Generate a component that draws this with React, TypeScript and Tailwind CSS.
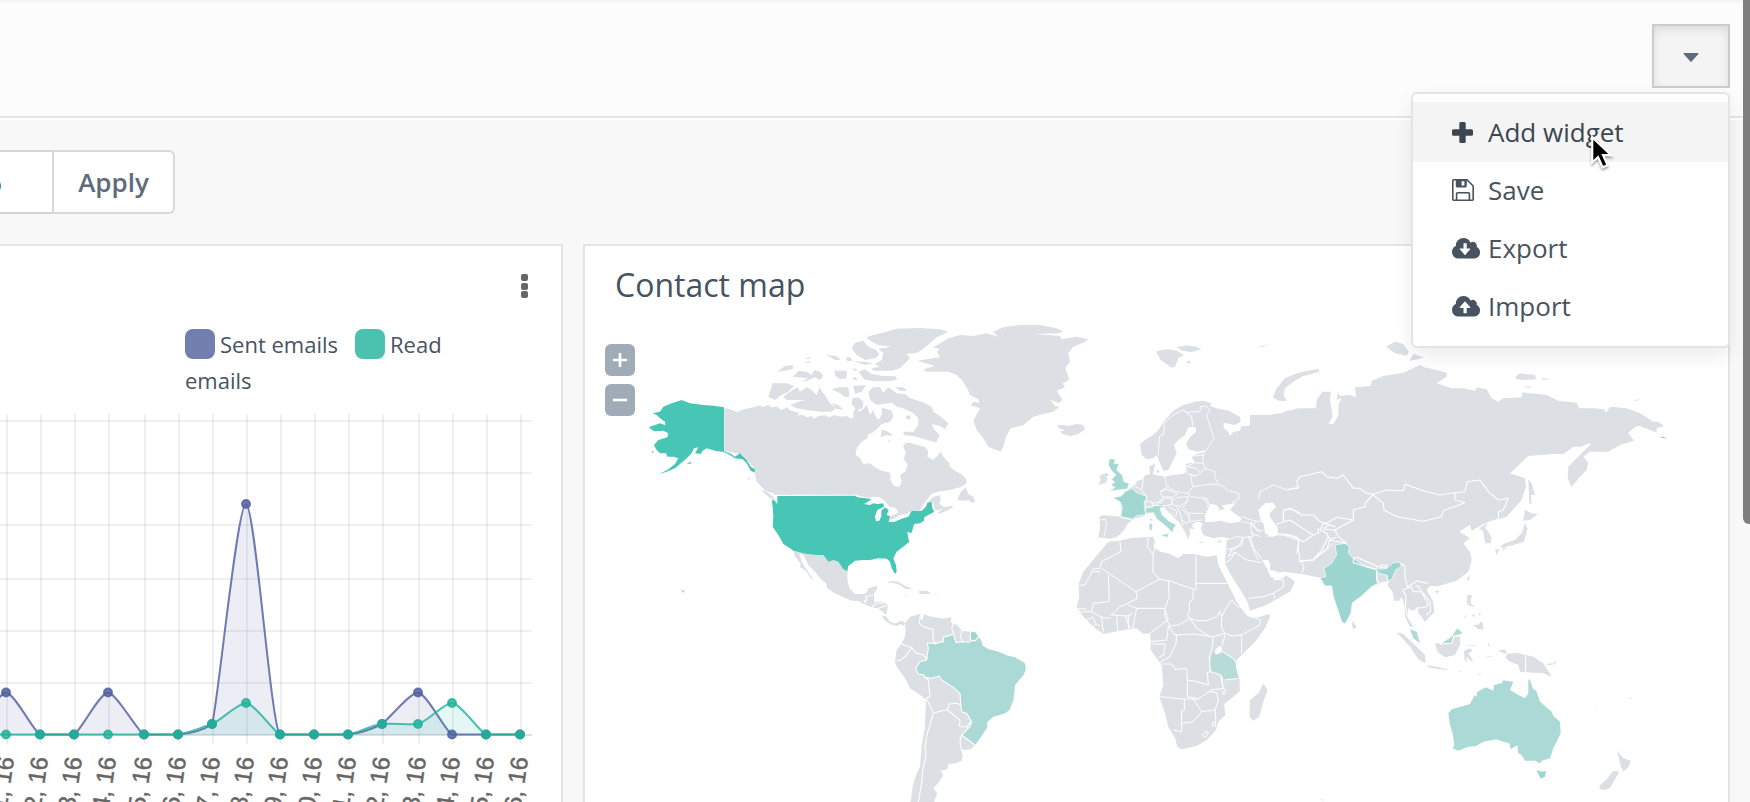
const LAND = '#dcdfe4';

/* ---------- Emails chart ---------- */

const xs = [6, 40, 74, 108, 144, 178, 212, 246, 280, 314, 348, 382, 418, 452, 486, 520];
const sent = [4, 0, 0, 4, 0, 0, 1, 22, 0, 0, 0, 1, 4, 0, 0, 0];
const read = [0, 0, 0, 0, 0, 0, 1, 3, 0, 0, 0, 1, 1, 3, 0, 0];
const toY = (v: number) => 734.5 - v * 10.48;

const sentLine =
  'M-28 734C-22 732 -2 692.5 6 692.5C14 692.5 34 732 40 734.5H74C80 732 100 692.5 108 692.5C116 692.5 138 732 144 734.5H178C190 733.5 204 730 212 724C217 712 237 504 246 504C255 504 271 727 280 734.5H348C360 733.500 372 729 382 724C390 718 410 692.5 418 692.5C426 692.5 446 732 452 734.5H520';
const readLine =
  'M-28 734.5H178C188 733.500 202 727 212 724C220 721 238 703 246 703C254 703 274 732 280 734.5H348C358 733.500 370 725 382 724C394 723 408 725 418 724C427 722 444 703 452 703C460 703 480 732 486 734.5H520';

function EmailChart() {
  return (
    <svg viewBox="0 410 561 392" className="block w-full" role="img" aria-label="Emails in time">
      <g stroke="#000" strokeOpacity="0.06" strokeWidth="2">
        {xs.map((x) => (
          <path key={x} d={`M${x + 1} 414V744`} />
        ))}
        {[421, 473, 525, 579, 631, 683].map((y) => (
          <path key={y} d={`M0 ${y}H532`} />
        ))}
        <path d="M0 735H532" strokeOpacity="0.12" />
      </g>
      <path d={sentLine + 'V735H-28Z'} fill="#4e5d9d" fillOpacity="0.1" />
      <path d={sentLine} fill="none" stroke="#4e5d9d" strokeOpacity="0.8" strokeWidth="2" />
      {xs.map((x, i) => (
        <circle key={x} cx={x} cy={toY(sent[i])} r="4" fill="#4e5d9d" fillOpacity="0.8" stroke="#4e5d9d" strokeOpacity="0.8" strokeWidth="2" />
      ))}
      <path d={readLine + 'V735H-28Z'} fill="#00b49c" fillOpacity="0.1" />
      <path d={readLine} fill="none" stroke="#1fb299" strokeOpacity="0.8" strokeWidth="2" />
      {xs.map((x, i) => (
        <circle key={x} cx={x} cy={toY(read[i])} r="4" fill="#1fb299" fillOpacity="0.8" stroke="#1fb299" strokeOpacity="0.8" strokeWidth="2" />
      ))}
      <g fill="#666" stroke="#666" strokeWidth="0.5" fontSize="24" fontFamily='"Liberation Sans", Arial, sans-serif' textAnchor="end">
        {xs.map((x, i) => (
          <text key={x} transform={`translate(${x + 8} 758) rotate(-82)`}>{`Jan ${i + 1}, 16`}</text>
        ))}
      </g>
    </svg>
  );
}

/* ---------- World map ---------- */

function WorldMap() {
  return (
    <svg viewBox="585 310 1143 492" className="block w-full" role="img" aria-label="Contacts by country">
      <g transform="translate(1040 320) scale(.33333)" fill={LAND}>
        <path d="M300 372L318 358 340 345 355 330 375 300 400 272 430 255 465 245 490 242 515 250 510 258 530 265 565 272 600 290 602 305 585 315 550 308 552 325 565 335 570 348 580 335 600 332 605 318 625 318 635 308 630 285 645 285 650 300 665 300 690 285 720 282 740 272 755 270 765 280 780 265 860 265 860 720 555 720 558 700 562 672 566 655 545 650 520 655 490 645 482 625 488 612 480 605 462 608 455 618 466 628 448 625 450 640 445 658 432 630 422 612 410 600 385 575 370 560 345 570 315 585 308 590 285 595 278 600 265 610 250 632 232 650 210 656 195 655 175 652 180 625 178 590 190 585 240 590 245 570 240 545 220 535 245 525 270 505 285 495 292 482 310 478 312 468 330 462 328 440 345 430 342 450 338 462 350 465 375 470 400 465 430 462 440 455 438 432 448 430 465 428 455 412 470 402 495 395 500 390 470 395 445 388 438 370 450 352 468 335 466 320 445 322 435 345 415 360 402 375 410 400 395 430 385 450 370 452 360 430 350 405 340 415 320 418 305 405Z" />
        <path d="M350 448L360 455 350 460ZM348 95L365 90 385 88 410 92 432 105 415 115 405 140 395 143 380 132 362 120ZM410 82L440 76 470 80 485 88 455 96 425 92ZM438 122L455 125 445 132ZM655 80L690 72 665 82ZM178 468L195 460 202 475 198 488 174 495 182 480ZM472 665L495 666 485 669ZM530 664L548 660 540 668Z" />
      </g>
      <g transform="translate(1270 320) scale(.33333)" fill={LAND}>
        <path d="M-60 285L0 285 25 280 50 280 80 265 110 270 150 288 155 275 138 262 140 240 158 215 183 215 180 240 185 270 188 290 175 312 190 312 205 285 205 255 215 235 200 240 205 215 210 228 240 225 258 232 255 202 302 198 305 182 340 168 400 158 450 135 462 142 500 150 530 158 530 170 500 190 545 205 580 205 615 212 620 202 650 208 665 235 685 245 700 235 755 232 757 217 830 225 865 242 920 248 928 265 975 265 1000 268 1010 277 1020 260 1070 265 1110 280 1150 305 1165 305 1182 318 1160 325 1160 338 1110 318 1100 318 1075 338 1092 362 1050 375 1015 395 960 395 940 410 955 428 950 450 930 470 905 500 893 475 895 440 920 415 965 370 950 372 935 380 910 380 880 402 850 402 775 408 720 460 765 475 768 500 755 540 710 590 685 598 660 605 645 622 658 640 665 655 662 670 645 670 640 635 628 625 640 612 605 632 600 615 568 635 580 642 600 655 580 670 598 695 605 720 -60 720Z" />
        <path d="M8 232L20 205 45 175 85 158 145 146 148 155 100 168 70 185 45 205 40 225 50 243 25 242ZM348 80L375 65 400 72 417 95 410 107 375 100ZM418 122L430 102 462 112 445 118ZM737 170L750 160 795 165 798 178 765 180 740 178ZM813 173L845 178 820 179ZM762 202L775 199 788 204ZM1092 240L1115 238 1098 243ZM775 478L785 490 795 525 782 525 785 552 778 550Z" />
      </g>
      <g transform="translate(1050 500) scale(.33333)" fill={LAND}>
        <path d="M175 125L210 122 240 115 285 112 310 110 315 125 310 140 330 155 355 160 385 175 400 162 430 162 470 170 500 166 505 195 520 225 540 265 560 305 585 340 600 352 625 352 658 342 660 350 645 385 615 425 580 460 560 480 558 505 568 535 570 572 545 595 522 612 526 645 505 665 498 690 470 720 440 738 395 748 382 740 375 715 355 680 345 640 328 590 340 555 335 495 320 475 302 450 302 420 300 400 280 402 260 385 235 388 195 395 160 402 130 380 100 350 80 320 88 290 85 255 100 215 125 185 150 155Z" />
        <path d="M525 190L530 120 600 90 700 80 900 60 900 260 845 258 830 245 815 235 800 222 755 222 705 210 690 218 670 210 655 180 635 178 650 205 662 230 680 238 700 235 708 225 735 245 720 275 690 292 650 315 600 332 590 300 565 260 540 220Z" />
        <path d="M600 600L625 580 640 550 653 570 640 605 628 650 610 662 598 650Z" />
      </g>
      <g transform="translate(1270 480) scale(.33333)" fill={LAND}>
        <path d="M570 190L600 215 605 240 595 275 560 302 505 318 480 318 470 330 490 365 493 395 465 425 455 410 445 400 440 385 428 392 415 385 412 410 430 440 420 440 405 410 403 375 395 350 388 362 372 362 368 335 355 320 352 305 340 305 320 314 305 320 270 352 245 370 215 400 185 318 165 318 150 293 95 282 0 270 0 150Z" />
        <path d="M248 422L260 440 250 448 246 436ZM380 457L400 462 440 500 465 525 467 550 445 538 420 500ZM468 555L500 560 545 572 510 568 475 562ZM495 490L520 492 545 485 555 465 570 470 570 495 555 525 525 532 502 515ZM582 512L600 505 608 512 595 520 610 545 598 540 590 528 590 548 584 540ZM585 497L625 494 610 498ZM592 345L605 345 602 370 615 380 600 378 590 370ZM610 435L625 434 636 422 641 448 625 448ZM605 405L612 402 614 414ZM625 400L632 398 630 408ZM580 418L594 398 588 412ZM565 573L578 575 570 577ZM620 586L640 576 628 584ZM640 530L675 528 660 531ZM653 490L660 492 656 500ZM683 512L705 508 710 522 740 518 790 530 820 550 845 590 815 578 790 578 750 575 745 555 715 542 706 532 712 524ZM825 552L850 550 860 540 855 552 840 556ZM765 90L785 100 803 103 780 120 760 122ZM765 130L773 145 762 185 730 195 690 205 700 192 735 180 755 160ZM675 208L688 208 680 225ZM695 207L712 202 702 210ZM600 285L595 305 590 295ZM495 332L508 332 500 342ZM1042 812L1060 835 1083 842 1075 862 1060 875 1052 858ZM1030 872L1048 875 1020 925 1005 930 990 928 988 918 1008 900ZM968 680L986 692 980 690ZM1075 656L1085 654 1084 657ZM886 554L892 556ZM153 957L164 959 158 963Z" />
      </g>

      {/* Inland seas */}
      <g transform="translate(1040 320) scale(.33333)" fill="#fff">
        <path d="M495 605L495 585 505 565 512 552 530 555 540 570 555 568 545 556 575 552 588 548 578 560 570 570 590 585 605 595 600 605 570 610 540 602 515 606ZM655 570L675 550 700 548 708 560 690 578 690 590 700 605 712 620 715 645 695 652 675 640 672 615 660 595Z" />
      </g>

      {/* Americas, northern part */}
      <g transform="translate(740 300) scale(.33333)" fill={LAND}>
        <path d="M-47 324L-30 328 -8 336 10 328 40 322 60 316 68 322 85 315 95 322 110 320 125 330 140 322 150 330 165 335 178 338 172 346 190 345 200 352 215 348 222 356 235 348 255 346 268 352 285 345 300 350 320 348 335 356 342 348 338 338 348 325 358 335 370 326 380 315 385 328 390 345 400 330 405 345 415 360 425 345 425 322 455 332 460 350 450 365 425 372 410 388 395 400 385 402 382 415 365 425 350 445 347 465 360 475 370 492 390 490 405 502 425 512 450 518 452 540 462 558 478 560 485 545 480 525 495 515 503 495 498 485 490 478 498 460 490 440 495 430 510 428 530 435 555 440 565 455 562 470 578 480 590 470 602 455 610 470 628 490 630 500 650 515 668 525 680 540 678 552 660 562 630 570 595 575 575 582 560 600 550 612 540 630 515 632 500 642 480 645 465 655 450 660 445 652 458 645 475 638 468 625 448 620 440 610 430 600 420 592 400 590 385 594 345 584 105 584 95 578 75 572 60 555 50 545 45 525 46 515 40 500 25 485 5 463 -15 460 -47 452Z" />
        <path d="M578 592L600 585 602 600 598 612 612 622 635 618 640 622 620 632 598 642 594 636 610 626 586 632 578 605 560 612ZM652 600L660 580 676 562 680 570 685 582 700 590 705 605 695 608 685 600 670 602ZM62 570L80 575 100 590 110 607 95 598 75 582ZM22 532L30 534 26 540Z" />
        <path d="M532 182L560 178 600 172 590 155 600 148 580 142 592 135 625 115 660 105 700 108 740 100 775 110 760 95 790 82 840 75 900 75 950 85 970 95 950 100 885 102 960 108 965 118 1010 110 1045 118 1030 128 1000 140 985 160 990 185 976 204 988 240 968 250 975 262 950 272 968 300 955 310 930 298 945 318 958 320 940 335 910 342 880 350 850 375 812 385 798 410 790 440 782 455 745 440 730 415 710 390 700 362 712 340 720 325 692 315 700 305 718 308 715 298 690 285 680 262 665 240 650 225 625 215 560 215 550 208 585 198ZM952 375L970 375 985 378 1010 372 1030 375 1035 388 1015 402 990 408 968 402 960 395 975 390 955 385Z" />
        <path d="M378 112L400 105 440 95 470 86 540 84 600 88 625 96 590 112 570 130 545 150 530 158 500 162 510 175 480 205 455 212 400 212 395 205 418 200 405 192 425 180 430 160 415 146 455 140 415 135 395 125ZM335 145L345 128 370 122 385 140 410 150 418 165 405 175 375 180 350 165ZM355 215L375 208 395 222 430 228 465 228 472 238 455 243 410 244 375 240ZM335 205L352 208 348 214ZM335 238L345 230 354 240ZM340 184L380 186 400 192 375 194ZM283 212L320 212 320 235 300 238 285 225ZM85 290L98 250 140 250 162 258 145 275 125 285 105 300ZM130 290L150 275 172 262 180 275 200 262 215 270 230 285 238 262 250 280 258 290 270 310 288 325 275 335 240 335 200 330 170 325 150 315 175 305 195 300 140 300ZM158 230L175 212 200 215 215 225 222 210 240 215 250 228 240 240 225 232 200 242 185 245 205 235ZM112 215L135 198 160 195 158 208 135 212ZM190 190L205 184 215 187ZM195 175L215 172 205 178ZM258 165L290 168 302 180 285 180ZM318 172L330 172 338 182 322 184ZM275 268L295 262 325 262 328 290 315 292 300 280ZM275 310L295 315 310 330 290 326ZM340 258L378 255 365 275 345 282ZM338 295L355 292 370 305 368 325 350 330 335 312Z" />
        <path d="M385 275L400 262 420 262 430 278 445 262 460 272 470 280 495 282 510 295 545 305 575 320 580 335 600 348 625 370 615 388 600 378 575 372 582 388 600 405 588 428 560 415 540 405 520 395 535 375 535 355 520 340 490 325 470 320 455 308 430 312 410 315 390 300ZM465 262L490 262 502 272 480 272ZM425 388L445 395 460 408 440 406 422 412ZM490 395L520 395 545 402 580 425 555 418 520 408 492 405ZM498 348L512 346 510 358 500 358ZM445 422L452 420 447 428ZM472 428L478 432Z" />
      </g>

      {/* Americas, southern part */}
      <g transform="translate(740 480) scale(.33333)" fill={LAND}>
        <path d="M160 213L175 216 205 222 235 225 248 222 265 245 280 240 295 245 310 268 323 275 322 300 328 325 345 342 370 342 380 338 385 325 412 317 410 330 402 340 402 365 430 365 443 375 440 405 432 400 415 385 395 382 370 372 355 362 335 362 310 352 285 340 262 325 258 308 245 300 225 275 205 255 190 225 178 220 185 245 200 270 220 298 215 298 195 270 180 262 182 250 165 230Z" />
        <path d="M425 405L440 410 450 425 468 430 482 422 495 428 492 438 482 432 470 438 455 434 440 425 428 415ZM438 308L455 303 475 305 495 318 515 325 510 328 495 326 480 315 460 308ZM536 334L548 332 560 333 575 340 555 342 540 343ZM492 344L504 346 496 347ZM585 343L594 344 588 346ZM488 285L492 290Z" />
        <path d="M495 430L510 410 530 405 542 400 540 412 546 422 552 402 565 408 585 412 610 416 635 412 632 425 640 432 652 435 665 452 690 455 705 455 715 470 725 485 728 498 745 508 775 515 805 528 825 532 855 550 857 570 850 585 825 615 820 660 808 690 795 700 760 710 742 725 740 745 720 775 705 795 692 808 672 810 662 805 668 825 665 842 648 850 625 852 622 868 602 872 610 885 598 905 580 925 592 940 582 966 512 966 518 920 528 885 540 860 545 800 555 740 558 660 545 648 510 625 495 595 470 560 465 545 470 510 485 490 495 470 497 450Z" />
      </g>

      {/* Highlighted countries */}
      <g fill="#47c5b5">
        <path transform="translate(580 240) scale(.33333)" d="M432 502L432 634 450 640 465 650 480 640 500 660 512 680 525 688 524 698 512 692 500 670 488 658 465 655 445 642 430 636 405 632 380 625 368 632 362 642 345 640 355 622 342 625 335 640 320 655 300 672 285 685 260 695 235 703 262 690 285 672 295 655 280 650 262 650 258 640 240 640 228 628 222 615 235 600 262 592 265 580 250 572 222 574 206 562 225 555 240 550 256 556 255 545 240 535 230 525 218 520 240 515 250 500 275 490 305 480 330 490 370 495 400 497ZM320 670L335 665 330 672ZM213 633L222 635 218 639Z" />
        <path transform="translate(740 480) scale(.33333)" d="M95 60L104 62 112 72 112 48 345 47 352 52 378 55 395 58 372 72 390 75 400 70 412 72 430 70 432 80 412 90 405 110 408 124 418 122 424 108 424 92 435 82 446 90 440 105 450 108 446 126 462 126 485 116 505 110 515 92 545 92 558 80 562 68 575 66 577 85 583 95 565 105 553 112 552 122 540 130 522 132 520 142 514 160 502 155 505 175 508 185 490 200 470 215 460 235 468 255 470 275 465 282 455 265 450 245 440 236 415 235 390 240 370 240 345 242 325 258 322 274 310 268 295 245 280 240 265 245 250 225 230 225 200 222 160 212 150 205 130 192 115 165 98 140 100 110 98 80Z" />
        <path d="M682 590l2 1-1 2zM1660 437l3 0 4 1.500-3-.2z" />
      </g>
      <path fill="#abd9d6" transform="translate(740 480) scale(.33333)" d="M640 462L648 488 665 485 690 487 708 482 716 470 725 485 728 498 745 508 775 515 805 528 825 532 855 550 857 570 850 585 825 615 820 660 808 690 795 700 760 710 742 725 740 745 720 775 705 795 665 765 690 740 695 725 680 700 665 695 662 670 660 640 640 622 605 600 598 588 575 595 555 592 552 585 535 582 527 565 540 545 560 540 565 505 562 490 585 490 610 485 610 472 630 470Z" />
      <path fill="#a0d6cf" transform="translate(740 480) scale(.33333)" d="M693 457L705 456 715 470 705 481 692 480Z" />
      <g transform="translate(1040 320) scale(.33333)" stroke="#fff" strokeWidth="2" strokeLinejoin="round">
        <path fill="#a3d8d3" d="M208 416L227 418 222 430 237 432 230 450 247 465 252 485 268 490 262 507 235 510 208 514 225 502 213 495 225 485 213 480 228 465 215 452 205 435ZM190 459L206 462 200 471Z" />
        <path fill="#a0d7d1" d="M275 505L290 518 322 530 318 550 312 560 318 584 290 587 278 597 243 590 247 560 240 545 218 533 245 528 255 515ZM329 594L337 597 333 608Z" />
        <path fill="#abdad6" d="M315 565L335 560 345 555 365 550 374 560 360 565 367 585 385 602 410 615 402 622 398 638 390 630 370 612 350 597 340 578 318 580ZM360 644L387 641 382 653ZM327 611L338 611 336 631 328 630Z" />
      </g>
      <path fill="#b6dbd9" transform="translate(1050 500) scale(.33333)" d="M490 455L518 455 555 480 558 505 565 535 525 540 515 522 488 515 480 490Z" />
      <g transform="translate(1270 480) scale(.33333)">
        <path fill="#9dd5d0" stroke="#fff" strokeWidth="2" d="M195 195L225 190 238 200 235 220 250 235 285 260 320 270 322 310 305 320 270 352 247 368 243 400 225 432 215 425 190 350 185 318 165 318 150 293 168 290 162 265 185 250 200 225ZM318 262L330 268 350 265 370 248 388 246 395 258 377 270 367 295 355 305 350 285 325 280Z" />
        <path fill="#b1dad7" d="M515 490L530 480 545 470 562 445 578 460 550 468 545 488ZM420 448L440 455 450 490 430 475Z" />
        <path fill="#abd9d6" d="M535 700L545 688 600 672 608 658 614 645 620 650 622 636 648 622 670 632 672 615 698 608 698 601 730 605 720 630 745 645 765 655 775 640 775 600 779 597 788 625 800 635 810 665 845 695 850 708 870 725 872 760 850 805 840 835 815 842 810 850 795 842 765 842 755 825 745 820 742 795 722 808 718 790 700 785 680 778 640 785 618 798 595 800 565 812 548 805 553 795 548 760 540 735Z" />
        <path fill="#9dd5d0" d="M800 870L814 875 828 873 825 890 812 896Z" />
      </g>

      {/* Borders */}
      <g fill="none" stroke="#fff" strokeWidth="3.2" strokeLinejoin="round">
        <path transform="translate(740 480) scale(.33333)" d="M378 370L372 362 382 360 376 350 400 345M395 382L408 370 440 368M415 385L440 376M430 403L442 406M540 410L538 430 550 440 578 448 580 478 585 492 608 484M485 492L515 503 530 520 552 525 560 538M515 503L500 525 480 542 470 540M640 432L635 445 642 462M665 452L662 470 668 485M692 457L690 480 706 482 716 470M640 462L648 488 665 485 690 487M555 592L565 600 568 630 570 650 558 655 572 680 580 700 570 735 562 760 555 800 558 830 548 870 545 910 535 966M580 700L605 692 622 690 650 712 660 722 658 738 680 742 692 725M622 690L628 672 650 670 662 675M662 805L660 780 665 765 705 795M665 765L690 740 695 725 680 700 665 695 662 670 660 640 640 622 605 600 598 588 575 595 555 592 552 585 535 582 527 565 540 545 560 540 565 505 562 490 585 490 610 485 610 472 640 462" />
        <path transform="translate(1040 320) scale(.33333)" strokeWidth="2.6" d="M355 405L358 350 372 342 372 310 400 285 428 270 442 278 455 276 480 275 482 260 498 258 505 265 510 272 500 285 512 325 522 355 498 392M428 270L455 290 458 318M465 408L492 405M440 440L465 428 488 430M492 395L488 420 494 445M440 460L470 468 490 450 494 445 525 455 524 472 535 490M440 440L470 445 478 456M375 468L380 500 410 515 445 520 458 500 452 468 470 466M458 500L500 494 530 492 550 500 565 512 597 520 596 538 575 548M378 505L360 515 370 535 350 550M310 478L305 510 320 530 315 545M285 500L305 508M445 520L450 530 500 535 508 555 498 560M360 515L380 508 412 522 400 532 370 530M395 545L412 532 445 530 440 545 420 558 398 555ZM445 540L430 560 445 580 490 580M490 535L505 555M445 580L450 605 485 600M410 560L420 580 425 600 440 610 450 603M385 560L410 573 408 590 395 580M420 560L448 590M425 600L430 616M195 600L200 610 192 650M180 600L198 598M240 590L280 602M635 605L632 625 640 650 610 652 590 650 566 658M605 590L635 600 660 605 670 600M605 605L640 612 650 605M632 615L650 625 660 635M640 612L650 632 668 632M312 545L335 545 340 560 318 562ZM335 550L365 545 372 535 395 535 398 552 375 558 340 556M610 652L595 680 570 695M625 650L640 690 655 720M660 650L632 640M680 650L720 640 770 650 780 665M655 540L660 515 700 495 740 510 780 500M730 605L730 570 755 568 780 578" />
        <path transform="translate(1050 500) scale(.33333)" strokeWidth="3" d="M210 125L213 155 180 172 155 185 150 205 130 207 122 225 105 255 82 257M125 215H152M155 205L258 275 328 238 308 215 310 165 292 140 295 112M308 165L316 142M438 168L438 270 355 242 328 238M438 250H535M175 225L178 305 130 310M258 275L262 295 230 312 210 320 185 345M355 242L358 290 345 325 260 325 235 315M430 272L428 300 418 305 418 335 412 345 420 355 385 375 360 378 345 350 345 325M420 355L440 362 470 362 500 350 510 335 515 350 530 322 545 300 560 318 580 325 595 345M260 325L248 385M225 345L240 385M235 345V385M200 350L203 395M182 345L232 348 248 340M155 352L160 398M130 310L125 335 155 352 182 355M85 325L110 328M85 336L125 335M110 360L128 352 138 370 130 380M138 372L152 378M345 330L355 358 320 385 300 400M355 378L350 420 302 425M355 378L375 405 430 402 490 410 525 400M420 355L440 385 480 410M515 350L515 385 525 400 545 408 575 405 630 375 632 360 590 345M575 405V460M490 410L485 450M525 405L515 440M500 450L518 455 555 480 558 490M380 405L378 430 360 470 325 490M305 432H345L342 465 325 472M335 492L365 492 375 508 410 505 412 540 440 545 475 555 472 518 480 515 478 470 485 450M412 540L412 590 445 597 485 570 520 565 512 525 480 515M328 590L400 597 445 597M403 598L403 630 395 632 395 695 370 690M397 670L430 665 455 635 495 630 505 600 500 578 480 575M430 597L455 635M495 630L498 665M515 530L518 560 528 575 522 585 515 570M525 540L565 535M457 705L468 693 476 698 466 712ZM488 668L496 665 498 678 488 678ZM530 150L575 135 580 112M545 148L535 170 555 157 590 180 635 188M600 110L612 145 635 178M525 190L545 175 555 157M595 295L640 290 670 280 700 262 700 240M670 280L674 295M670 238L700 240M700 105L745 120 745 145 750 180 762 200 755 222M750 182L790 180 830 150 850 130" />
        <path transform="translate(1270 320) scale(.33333)" d="M55 508L85 505 80 485 90 470 155 455 170 470 200 475 220 465 250 505 270 505 290 520 310 523 350 510 400 512 405 493 460 512 510 525 555 518 585 515 592 485 630 480 655 515 685 540 715 535 700 570 685 575 685 598 660 605 630 620M310 525L340 550 342 570 380 590 460 604 515 590 520 572 585 548 555 540 555 518M310 523L285 550 285 560 250 570 250 600 200 592 170 610 150 605 130 585 95 585 60 565 40 572 40 605M250 600L195 630 205 650 230 670M160 625L180 615 195 620 160 610 150 630 170 640 175 650M160 628L195 630M20 612L60 600 90 620 130 645 100 665 60 645 25 645M130 645L145 640 145 625M175 650L180 658 200 652M86 665L80 700M175 650L155 690 130 718" />
        <path transform="translate(1270 480) scale(.33333)" d="M85 245L130 240 140 228 172 205 178 180 230 190M250 235L260 232 320 258 348 264 350 256 330 256M250 235L250 248 318 268M390 250L405 258 405 290 412 320 430 310 440 303 475 310M398 330L412 325 425 320 430 335 455 335 462 350 475 375 470 380 440 385M455 335L445 318 435 318M455 335L480 365 482 395 468 405M440 400L444 380M398 330L408 350 406 380 412 410M320 275L320 300 330 310M350 285L355 310M510 492L545 490 552 468 572 468M767 522V580" />
      </g>
      <path fill="#fff" transform="translate(1050 500) scale(.33333)" d="M495 450L508 438 516 444 514 458 496 464Z" />
    </svg>
  );
}

/* ---------- Menu ---------- */

function PlusIcon() {
  return (
    <svg viewBox="0 0 21 21" className="w-[21px]" aria-hidden="true">
      <path
        fill="currentColor"
        d="M8.800 0h3.400a1.500 1.500 0 0 1 1.500 1.500v5.800h5.800A1.500 1.500 0 0 1 21 8.800v3.400a1.500 1.500 0 0 1-1.500 1.500h-5.800v5.800a1.500 1.500 0 0 1-1.500 1.500H8.800a1.500 1.500 0 0 1-1.500-1.500v-5.800H1.500A1.500 1.500 0 0 1 0 12.200V8.800a1.500 1.500 0 0 1 1.500-1.500h5.800V1.500A1.500 1.500 0 0 1 8.800 0Z"
      />
    </svg>
  );
}

function SaveIcon() {
  return (
    <svg viewBox="0 0 22 22" className="w-[22px]" fill="none" stroke="currentColor" strokeWidth="1.6" aria-hidden="true">
      <path d="M1.6.8H15l6.2 6.2v13.4a.8.8 0 0 1-.8.8H1.6a.8.8 0 0 1-.8-.8V1.6A.8.8 0 0 1 1.6.8Z" />
      <path d="M4.6 21v-6.4a.8.8 0 0 1 .8-.8h11.2a.8.8 0 0 1 .8.8V21" />
      <path fill="currentColor" fillRule="evenodd" stroke="none" d="M3.800.8h11v6.200a1.400 1.400 0 0 1-1.400 1.400H5.200A1.400 1.400 0 0 1 3.800 7ZM9.600 2.200v4.400h2.800V2.200Z" />
    </svg>
  );
}

function CloudIcon({ up = false }: { up?: boolean }) {
  return (
    <svg viewBox="0 0 28 21" className="w-7 shrink-0" aria-hidden="true">
      <path
        fill="currentColor"
        d="M28 14.6a5.7 5.7 0 0 1-5.8 5.9H6.6A6.5 6.5 0 0 1 0 14a6.6 6.6 0 0 1 3.8-6A7.7 7.7 0 0 1 11.5 0c3.2 0 6 1.9 7.1 4.7a3.9 3.9 0 0 1 6 4.4 5.8 5.8 0 0 1 3.4 5.5Z"
      />
      <path
        fill="#fff"
        d={up ? 'M13 5.2l5.4 6.1-.4.6h-3.3v5.4h-3.2v-5.4H7.9l-.3-.6Z' : 'M13 17.2l5.4-6.1-.4-.6h-3.3V5.2h-3.2v5.3H7.9l-.3.6Z'}
      />
    </svg>
  );
}

const itemClass = '-mb-[2px] flex h-[60px] w-full items-center pl-[39px] text-left text-[26px]';
const iconClass = 'flex w-[36px]';

function ActionsMenu() {
  return (
    <div
      role="menu"
      className="absolute top-[92px] right-5 w-[319px] rounded-md border-2 border-[#e4e4e4] bg-white pt-2 pb-3 text-[#47535f] shadow-[0_8px_20px_rgba(0,0,0,0.08)]"
    >
      <button type="button" role="menuitem" className={`${itemClass} bg-[#f4f4f4] text-[#3c4650]`}>
        <span className={iconClass}><PlusIcon /></span>
        Add widget
      </button>
      <button type="button" role="menuitem" className={itemClass}>
        <span className={iconClass}><SaveIcon /></span>
        Save
      </button>
      <button type="button" role="menuitem" className={itemClass}>
        <span className={iconClass}><CloudIcon /></span>
        Export
      </button>
      <button type="button" role="menuitem" className={itemClass}>
        <span className={iconClass}><CloudIcon up /></span>
        Import
      </button>
      <svg viewBox="0 0 26 34" className="absolute top-[41px] left-[176px] w-[28px] drop-shadow-[0_2px_1px_rgba(0,0,0,0.35)]" aria-hidden="true">
        <path d="M3 2v23.5l5.4-5 4.2 9.500 4.600-2-4.200-9.300h7.600Z" fill="#000" stroke="#fff" strokeWidth="2" />
      </svg>
    </div>
  );
}

const zoomClass = 'flex h-8 w-[30px] items-center justify-center rounded-md bg-[#a0abb8] text-white';

export default function App() {
  return (
    <div className="relative h-screen overflow-hidden bg-[#f8f8f8] font-['Open_Sans',sans-serif] text-[#47535f]">
      <header className="relative z-10 flex h-[118px] justify-end border-b-2 border-[#e5e5e5] bg-[#fcfcfc] pt-6 pr-5 shadow-[0_2px_0_#fff,inset_0_4px_4px_-3px_rgba(0,0,0,0.06)]">
        <button
          type="button"
          aria-label="Dashboard actions"
          className="flex h-16 w-[78px] items-center justify-center border-2 border-[#ccc] bg-[#f4f4f4] pt-[2px] shadow-[inset_0_4px_8px_rgba(0,0,0,0.1)]"
        >
          <svg viewBox="0 0 16 9" className="w-4" aria-hidden="true">
            <path d="M1 0h14a.6.6 0 0 1 .4 1L8.600 8.600a.8.8 0 0 1-1.200 0L.6 1A.6.6 0 0 1 1 0Z" fill="#5d6b7d" />
          </svg>
        </button>
        <ActionsMenu />
      </header>

      <form className="mt-8 flex h-16 text-[26px] text-[#5d6b7d]" onSubmit={(e) => e.preventDefault()}>
        <input
          aria-label="Date to"
          defaultValue="Jan 16, 2016"
          className="-ml-[180px] w-[232px] border-y-2 border-[#d4d4d4] bg-white pr-[50px] text-right outline-none"
        />
        <button type="submit" className="w-[123px] rounded-r-md border-2 border-[#d9d9d9] bg-white font-semibold">
          Apply
        </button>
      </form>

      <main className="mt-[30px] grid grid-cols-[563fr_1147fr] gap-5 pr-5">
        <section className="min-h-[620px] border-t-2 border-r-2 border-[#e4e4e4] bg-white">
          <div className="flex h-[70px] justify-end pt-7 pr-[33px]">
            <button type="button" aria-label="Widget options" className="flex h-6 flex-col justify-between">
              <span className="size-[7px] rounded-[2px] bg-[#666]" />
              <span className="size-[7px] rounded-[2px] bg-[#666]" />
              <span className="size-[7px] rounded-[2px] bg-[#666]" />
            </button>
          </div>
          <p className="ml-[185px] h-[94px] w-[310px] pt-[10px] text-[22px] leading-9">
            <span className="mr-[5px] inline-block h-[30px] w-[30px] rounded-lg bg-[#727fae] align-[-6px]" />
            Sent emails
            <span className="mr-[5px] ml-[17px] inline-block h-[30px] w-[30px] rounded-lg bg-[#4bc2af] align-[-6px]" />
            Read emails
          </p>
          <EmailChart />
        </section>

        <section className="min-h-[620px] border-2 border-[#e4e4e4] bg-white">
          <h2 className="h-16 pt-[15px] pl-[30px] text-[32px] leading-[48px]">Contact map</h2>
          <div className="relative">
            <div className="absolute top-[34px] left-5 flex flex-col gap-2">
              <button type="button" aria-label="Zoom in" className={zoomClass}>
                <svg viewBox="0 0 14 14" className="w-[14px]" aria-hidden="true"><path d="M7 0v14M0 7h14" stroke="#fff" strokeWidth="2.6" /></svg>
              </button>
              <button type="button" aria-label="Zoom out" className={zoomClass}>
                <svg viewBox="0 0 14 14" className="w-[14px]" aria-hidden="true"><path d="M0 7h14" stroke="#fff" strokeWidth="2.6" /></svg>
              </button>
            </div>
            <WorldMap />
          </div>
        </section>
      </main>

      <div className="absolute top-0 right-0 z-20 h-[524px] w-[7px] rounded-bl-md bg-[#7f7f7f]" />
    </div>
  );
}
